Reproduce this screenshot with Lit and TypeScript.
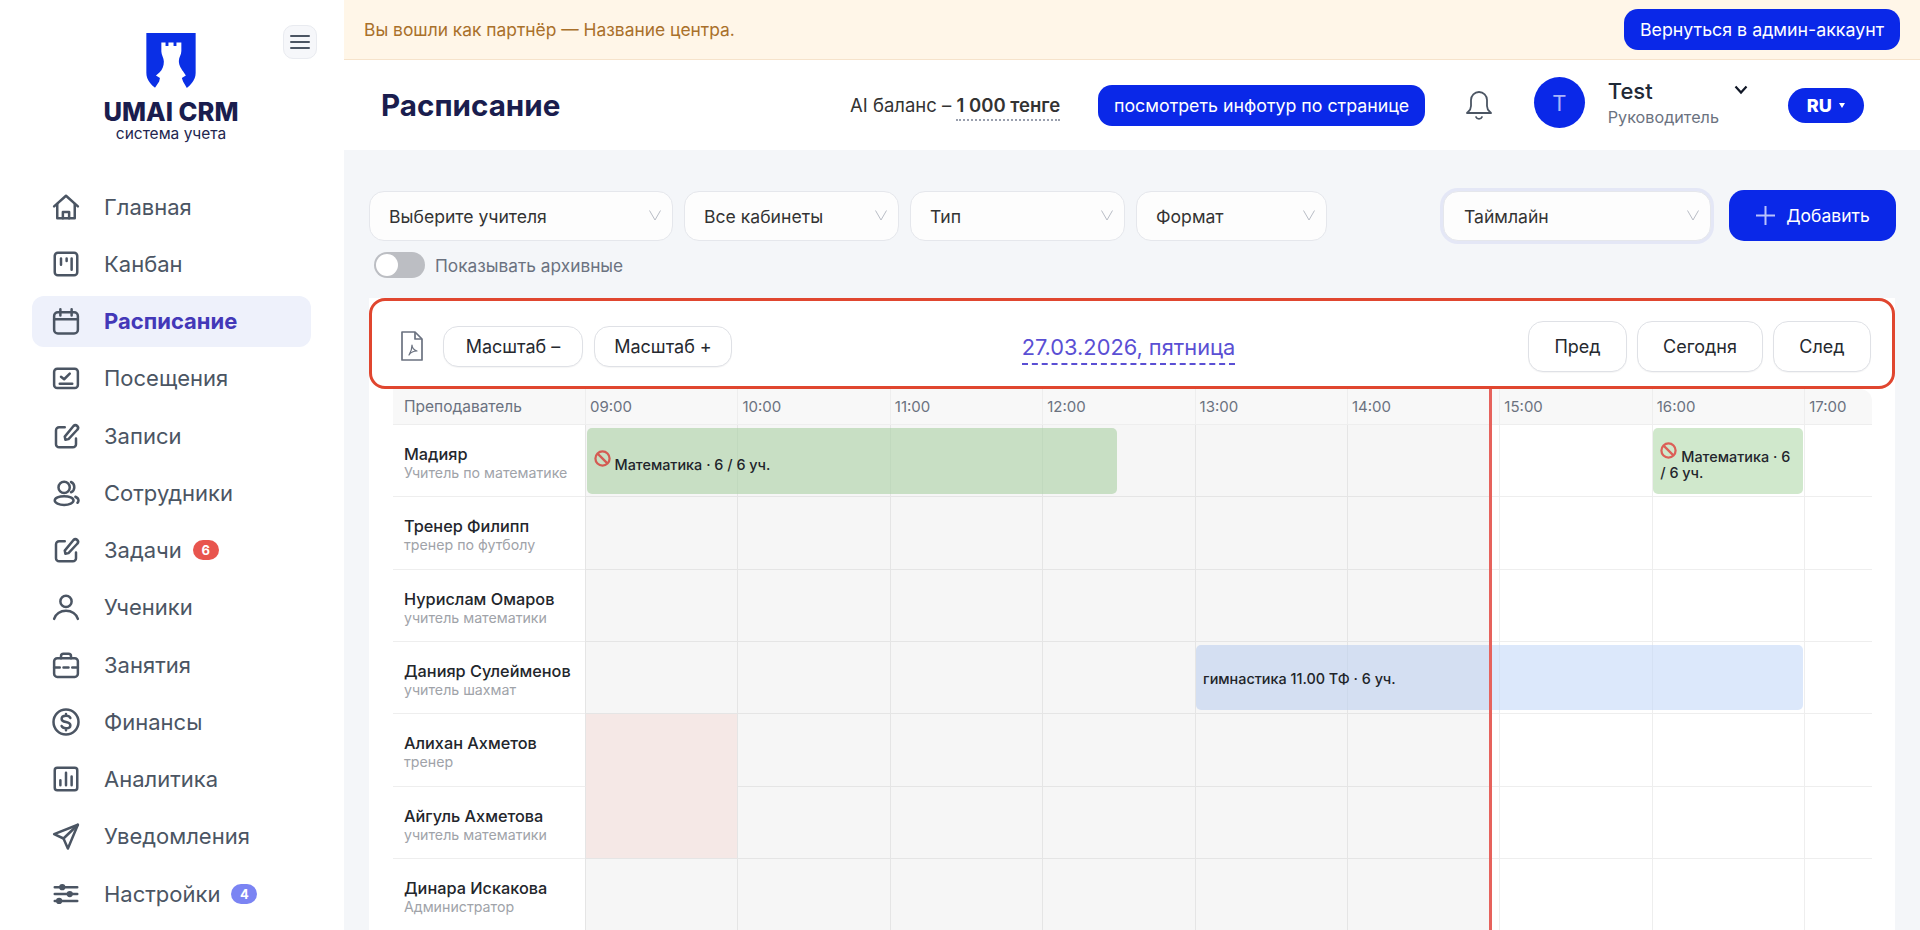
import { LitElement, html, css, svg } from 'lit';
import { customElement } from 'lit/decorators.js';

const icons: Record<string, unknown> = {
  home: svg`<path d="M2.5 11.5 12 3l9.5 8.5"/><path d="M5 9.5V21h14V9.5"/><path d="M9.5 21v-5h5v5"/>`,
  kanban: svg`<rect x="3" y="3" width="18" height="18" rx="2.5"/><path d="M8 7.5v5M12.5 7.5v2M16.5 7.5v9"/>`,
  calendar: svg`<rect x="2.5" y="5" width="19" height="17" rx="3"/><path d="M2.5 10.5h19M7.5 2.5v5M16.5 2.5v5"/>`,
  attendance: svg`<rect x="2.5" y="4.5" width="19" height="15.5" rx="2.5"/><path d="m8 11 2.5 2 4.5-4.5M7 16.5h10"/>`,
  edit: svg`<path d="M11 5H6.5A2.5 2.5 0 0 0 4 7.5v11A2.5 2.5 0 0 0 6.5 21h11a2.5 2.5 0 0 0 2.5-2.5V14"/><path d="M11 12.5 11.5 15 14 14.5 21 7a2 2 0 0 0-3-3z"/>`,
  users: svg`<circle cx="10.5" cy="7.5" r="4.5"/><ellipse cx="10.5" cy="18" rx="7.5" ry="3.5"/><path d="M16 3.2a4.5 4.5 0 0 1 0 8.2M19.5 15c1.5.7 2.5 1.8 2.5 3 0 .7-.3 1.3-.8 1.8"/>`,
  person: svg`<circle cx="12" cy="7.5" r="4.5"/><path d="M2.5 21.5c1-4 5-6.500 9.500-6.500s8.500 2.500 9.500 6.500"/>`,
  case: svg`<rect x="2.5" y="6.5" width="19" height="15" rx="2.5"/><path d="M8 6.5V5a2 2 0 0 1 2-2h4a2 2 0 0 1 2 2v1.500M2.500 14H7M10 14h4M17 14h4.500"/>`,
  money: svg`<circle cx="12" cy="12" r="10"/><path d="M15.500 8.800C15 7.600 13.700 7 12 7c-2 0-3.500 1-3.500 2.500 0 3.500 7 1.500 7 5 0 1.500-1.500 2.500-3.500 2.500-1.700 0-3-.600-3.500-1.800M12 5.500V7M12 17v1.500"/>`,
  chart: svg`<rect x="3" y="3" width="18" height="18" rx="2"/><path d="M7.500 17v-4M12 17V7M16.500 17v-7"/>`,
  send: svg`<path d="M21.500 3 2.500 10.500l7.500 3.500 3.500 8z"/><path d="M21.500 3 10 14"/>`,
  sliders: svg`<path d="M3 6.500h18M3 12h18M3 17.500h18"/><circle cx="9" cy="6.500" r="1.500" fill="currentColor"/><circle cx="15" cy="12" r="1.500" fill="currentColor"/><circle cx="6.500" cy="17.500" r="1.500" fill="currentColor"/>`,
};

const nav = [
  { icon: 'home', label: 'Главная' },
  { icon: 'kanban', label: 'Канбан' },
  { icon: 'calendar', label: 'Расписание', active: true },
  { icon: 'attendance', label: 'Посещения' },
  { icon: 'edit', label: 'Записи' },
  { icon: 'users', label: 'Сотрудники' },
  { icon: 'edit', label: 'Задачи', badge: '6', badgeClass: 'red' },
  { icon: 'person', label: 'Ученики' },
  { icon: 'case', label: 'Занятия' },
  { icon: 'money', label: 'Финансы' },
  { icon: 'chart', label: 'Аналитика' },
  { icon: 'send', label: 'Уведомления' },
  { icon: 'sliders', label: 'Настройки', badge: '4', badgeClass: 'violet' },
];

const hours = ['09:00', '10:00', '11:00', '12:00', '13:00', '14:00', '15:00', '16:00', '17:00'];
const HOUR_WIDTH = 152.4;
const NAME_WIDTH = 192;

const teachers = [
  {
    name: 'Мадияр',
    role: 'Учитель по математике',
    events: [
      { from: 9.01, to: 12.49, text: 'Математика · 6 / 6 уч.', kind: 'green', ban: true },
      { from: 16.01, to: 16.99, text: 'Математика · 6 / 6 уч.', kind: 'green', ban: true },
    ],
  },
  { name: 'Тренер Филипп', role: 'тренер по футболу', events: [] },
  { name: 'Нурислам Омаров', role: 'учитель математики', events: [] },
  {
    name: 'Данияр Сулейменов',
    role: 'учитель шахмат',
    events: [{ from: 13.01, to: 16.99, text: 'гимнастика 11.00 ТФ · 6 уч.', kind: 'blue', ban: false }],
  },
  { name: 'Алихан Ахметов', role: 'тренер', blocked: true, events: [] },
  { name: 'Айгуль Ахметова', role: 'учитель математики', blocked: true, events: [] },
  { name: 'Динара Искакова', role: 'Администратор', events: [] },
];

const chevron = html`<svg class="chev" viewBox="0 0 14 14"><path d="M1.5 2.5 7 12l5.5-9.5" /></svg>`;

@customElement('app-root')
export class AppRoot extends LitElement {
  static styles = css`
    :host {
      display: flex;
      width: 1920px;
      height: 930px;
      overflow: hidden;
      background: #f4f6f9;
      font-family: Inter, 'Noto Sans', sans-serif;
      color: #1f2937;
    }

    .sidebar {
      flex: 0 0 344px;
      background: #fff;
      position: relative;
    }
    .burger {
      position: absolute;
      left: 283px;
      top: 25px;
      width: 34px;
      height: 34px;
      box-sizing: border-box;
      border: 1px solid #e9ebf0;
      border-radius: 10px;
      background: #f6f7fa;
      display: flex;
      flex-direction: column;
      justify-content: center;
      align-items: center;
      gap: 4px;
    }
    .burger i {
      display: block;
      width: 20px;
      height: 2px;
      border-radius: 1px;
      background: #4b5563;
    }
    .logo {
      padding-top: 33px;
      display: flex;
      flex-direction: column;
      align-items: center;
      width: 342px;
    }
    .logo svg {
      width: 50px;
      height: 55px;
    }
    .logo b {
      margin-top: 9px;
      font-size: 25.5px;
      line-height: 30px;
      font-weight: 800;
      color: #1a1d4e;
    }
    .logo span {
      margin-top: -3px;
      font-size: 15.5px;
      line-height: 19px;
      color: #23264f;
    }
    .nav {
      margin-top: 38px;
      padding: 0 33px 0 32px;
      display: flex;
      flex-direction: column;
      gap: 6.25px;
    }
    .nav-item {
      height: 51px;
      border-radius: 12px;
      display: flex;
      align-items: center;
      padding-left: 19px;
      font-size: 22px;
      color: #4b5563;
    }
    .nav-item svg {
      width: 30px;
      height: 30px;
      margin-right: 23px;
      flex: none;
      fill: none;
      stroke: #4b5563;
      stroke-width: 2;
      stroke-linecap: round;
      stroke-linejoin: round;
    }
    .nav-item.active {
      background: #eef1fb;
      color: #4338b8;
      font-weight: 700;
    }
    .badge {
      margin-left: 11px;
      width: 26px;
      height: 20px;
      border-radius: 10px;
      color: #fff;
      font-size: 13px;
      font-weight: 700;
      display: flex;
      align-items: center;
      justify-content: center;
    }
    .badge.red {
      background: #e8554e;
    }
    .badge.violet {
      background: #7b84f3;
    }

    .main {
      flex: 1;
      min-width: 0;
      display: flex;
      flex-direction: column;
    }
    .banner {
      height: 60px;
      box-sizing: border-box;
      background: #fff6e8;
      border-bottom: 1px solid #f6e3cb;
      display: flex;
      align-items: center;
      justify-content: space-between;
      padding: 0 20px;
      font-size: 17.4px;
      color: #a9702a;
    }
    .primary {
      background: #0a28e8;
      color: #fff;
      font-size: 17.8px;
      display: flex;
      align-items: center;
      border-radius: 14px;
      padding: 0 16px;
      height: 41px;
      white-space: nowrap;
    }
    .topbar {
      height: 90px;
      background: #fff;
      display: flex;
      align-items: center;
      padding-left: 37px;
    }
    .topbar h1 {
      margin: 0;
      font-size: 29.6px;
      font-weight: 700;
      color: #1a1d4e;
      width: 469px;
    }
    .balance {
      width: 248px;
      font-size: 18.5px;
      color: #333;
      white-space: nowrap;
    }
    .balance b {
      font-weight: 600;
      border-bottom: 2px dotted #9aa0ae;
      padding-bottom: 3px;
    }
    .bell {
      width: 30px;
      height: 34px;
      margin: -2px 0 0 39px;
      fill: none;
      stroke: #4b5563;
      stroke-width: 1.8;
      stroke-linecap: round;
      stroke-linejoin: round;
    }
    .avatar {
      width: 51px;
      height: 51px;
      border-radius: 50%;
      background: #0a28e8;
      color: #a9b4fa;
      font-size: 22px;
      display: flex;
      align-items: center;
      justify-content: center;
      margin: -5px 23px 0 39.5px;
    }
    .user {
      width: 180px;
      position: relative;
      margin-top: -5px;
    }
    .user b {
      display: block;
      font-weight: 500;
      font-size: 22px;
      line-height: 28px;
      color: #1f2937;
    }
    .user span {
      font-size: 16.2px;
      line-height: 24px;
      color: #6b7280;
    }
    .user svg {
      position: absolute;
      left: 126px;
      top: 8px;
      width: 14px;
      height: 10px;
      fill: none;
      stroke: #111827;
      stroke-width: 2.2;
    }
    .lang {
      width: 76px;
      height: 35px;
      border-radius: 18px;
      background: #0a28e8;
      color: #fff;
      font-weight: 800;
      font-size: 18px;
      display: flex;
      align-items: center;
      justify-content: center;
      gap: 7px;
    }
    .lang i {
      width: 0;
      height: 0;
      border: 3px solid transparent;
      border-top: 5px solid #fff;
      border-bottom: 0;
    }

    .content {
      flex: 1;
      min-height: 0;
      padding: 41px 25px 0;
      display: flex;
      flex-direction: column;
    }
    .filters {
      display: flex;
      gap: 11px;
      align-items: flex-start;
    }
    .select {
      flex: none;
      height: 50px;
      box-sizing: border-box;
      border: 1px solid #e5e7ec;
      border-radius: 15px;
      background: #fdfdfd;
      display: flex;
      align-items: center;
      justify-content: space-between;
      padding: 0 10px 0 19px;
      font-size: 17.6px;
      color: #333;
    }
    .select.view {
      margin-left: 105px;
      box-shadow: 0 0 0 3px #e4e7f6;
      margin-right: 7px;
      padding-left: 20px;
    }
    .chev {
      width: 14px;
      height: 14px;
      margin-top: -3px;
      fill: none;
      stroke: #b9bdc6;
      stroke-width: 1;
    }
    .add {
      flex: none;
      height: 51px;
      width: 167px;
      margin-top: -1px;
      border-radius: 15px;
      background: #0a28e8;
      color: #fff;
      font-size: 17.5px;
      display: flex;
      align-items: center;
      justify-content: center;
      gap: 10px;
    }
    .add svg {
      width: 21px;
      height: 21px;
      stroke: #b9c2fb;
      stroke-width: 2;
    }
    .archive {
      margin-top: 11px;
      display: flex;
      align-items: center;
      gap: 10px;
      padding-left: 5px;
      height: 26px;
      font-size: 17.3px;
      color: #6b7280;
    }
    .toggle {
      width: 51px;
      height: 26px;
      border-radius: 13px;
      background: #bcbec3;
      display: flex;
      align-items: center;
      padding-left: 2px;
      box-sizing: border-box;
    }
    .toggle i {
      width: 22px;
      height: 22px;
      border-radius: 50%;
      background: #fff;
    }

    .panel {
      margin-top: 20px;
      flex: 1;
      min-height: 0;
      background: #fff;
      display: flex;
      flex-direction: column;
    }
    .toolbar {
      height: 91px;
      box-sizing: border-box;
      border: 3px solid #e0462f;
      border-radius: 16px;
      background: #fff;
      display: grid;
      grid-template-columns: 1fr auto 1fr;
      align-items: center;
      padding: 5px 21px 0 28px;
      position: relative;
      z-index: 2;
    }
    .tools {
      display: flex;
      align-items: center;
      gap: 11px;
    }
    .tools.right {
      justify-content: flex-end;
      gap: 10px;
    }
    .pdf {
      width: 24px;
      height: 32px;
      margin-right: 8px;
      fill: none;
      stroke: #6b7280;
      stroke-width: 1.7;
      stroke-linejoin: round;
    }
    .btn {
      box-sizing: border-box;
      height: 41px;
      border: 1px solid #dfe1e6;
      border-radius: 15px;
      background: #fff;
      display: flex;
      align-items: center;
      justify-content: center;
      font-size: 18px;
      color: #26292f;
      box-shadow: 0 1px 1px rgba(0, 0, 0, 0.04);
    }
    .tools.right .btn {
      height: 51px;
    }
    .date {
      margin: 6px 14px 0 0;
      font-size: 21.8px;
      color: #5a4fd4;
      padding-bottom: 3px;
      border-bottom: 2px dashed #5a4fd4;
      white-space: nowrap;
    }

    .timeline {
      margin: 0 23px 0 24px;
      position: relative;
      flex: 1;
      min-height: 0;
    }
    .row {
      display: grid;
      grid-template-columns: ${NAME_WIDTH}px repeat(8, ${HOUR_WIDTH}px) 1fr;
      height: 72.33px;
      position: relative;
      box-sizing: border-box;
    }
    .row.head {
      height: 36px;
      background: #f8f8f8;
      color: #6b7280;
      border-radius: 0 12px 0 0;
    }
    .cell {
      border-left: 1px solid #eeeeee;
      border-bottom: 1px solid #eeeeee;
      box-sizing: border-box;
    }
    .row.head .cell {
      display: flex;
      align-items: center;
      padding-left: 4px;
      font-size: 15px;
    }
    .who {
      border-left: 0;
      padding: 4px 0 0 11px;
      display: flex;
      flex-direction: column;
      justify-content: center;
      background: #fff;
      white-space: nowrap;
    }
    .row.head .who {
      padding: 0 0 0 11px;
      font-size: 15.5px;
      border-left: 0;
      flex-direction: row;
      justify-content: flex-start;
      background: transparent;
    }
    .who b {
      font-weight: 500;
      font-size: 16.3px;
      line-height: 22px;
      color: #23262c;
    }
    .who span {
      margin-top: -1px;
      font-size: 14.2px;
      line-height: 18px;
      color: #a0a3a9;
    }
    .blocked {
      background: #fef1ef;
    }
    .row.first-blocked .blocked {
      border-bottom-color: #fef1ef;
    }
    .event {
      position: absolute;
      top: 3px;
      height: 65.5px;
      border-radius: 5px;
      box-sizing: border-box;
      padding: 2px 7px 0;
      display: flex;
      align-items: center;
      font-weight: 500;
      font-size: 14.4px;
      line-height: 16px;
      color: #23262c;
    }
    .event.green {
      background: rgba(177, 217, 170, 0.6);
    }
    .event.blue {
      background: rgba(197, 217, 248, 0.6);
    }
    .ban {
      width: 17px;
      height: 17px;
      vertical-align: 3px;
      margin-right: 4px;
      fill: none;
      stroke: #dc5f57;
      stroke-width: 2.4;
    }
    .past {
      position: absolute;
      left: ${NAME_WIDTH}px;
      top: 36px;
      bottom: 0;
      width: 905px;
      background: rgba(0, 0, 0, 0.035);
      pointer-events: none;
    }
    .now {
      position: absolute;
      left: 1096px;
      top: 0;
      bottom: 0;
      width: 3px;
      background: #e6625c;
    }
  `;

  renderRow(t: (typeof teachers)[number], i: number) {
    const firstBlocked = t.blocked && teachers[i + 1]?.blocked;
    return html`
      <div class="row ${firstBlocked ? 'first-blocked' : ''}">
        <div class="cell who"><b>${t.name}</b><span>${t.role}</span></div>
        ${hours.map((_, h) => html`<div class="cell ${t.blocked && h === 0 ? 'blocked' : ''}"></div>`)}
        ${t.events.map(
          (e) => html`
            <div
              class="event ${e.kind}"
              style="left:${NAME_WIDTH + (e.from - 9) * HOUR_WIDTH}px;width:${(e.to - e.from) * HOUR_WIDTH}px"
            >
              <div>
                ${e.ban
                  ? html`<svg class="ban" viewBox="0 0 18 18"><circle cx="9" cy="9" r="7.5" /><path d="M3.8 3.8l10.4 10.4" /></svg>`
                  : ''}${e.text}
              </div>
            </div>
          `,
        )}
      </div>
    `;
  }

  render() {
    return html`
      <aside class="sidebar">
        <div class="burger"><i></i><i></i><i></i></div>
        <div class="logo">
          <svg viewBox="0 0 49.3 55">
            <path d="M0 0H49.3V40C49.3 47 44 52 40.5 55H9C5 52 0 47 0 40Z" fill="#0a2fe6" />
            <path
              d="M15 9.5h4.2v3.5h2.9V9.5h5.1v3.5h2.9V9.5H35V18c0 4-2.5 6-2.5 10 0 5 3 8.5 5 11.5l2 3-4 2.5 1.2 3.5 3.8 6.5-1 .6H9.3l-.8-.6 4.3-6.5.8-3.5-4-2.5 3.5-3c3-3 4.4-6.5 4.4-11 0-3.500-2.500-6.500-2.500-10z"
              fill="#fff"
            />
          </svg>
          <b>UMAI CRM</b>
          <span>система учета</span>
        </div>
        <nav class="nav">
          ${nav.map(
            (n) => html`
              <div class="nav-item ${n.active ? 'active' : ''}">
                <svg viewBox="0 0 24 24">${icons[n.icon]}</svg>
                ${n.label}
                ${n.badge ? html`<span class="badge ${n.badgeClass}">${n.badge}</span>` : ''}
              </div>
            `,
          )}
        </nav>
      </aside>
      <div class="main">
        <div class="banner">
          <span>Вы вошли как партнёр — Название центра.</span>
          <div class="primary">Вернуться в админ-аккаунт</div>
        </div>
        <header class="topbar">
          <h1>Расписание</h1>
          <div class="balance">AI баланс – <b>1 000 тенге</b></div>
          <div class="primary">посмотреть инфотур по странице</div>
          <svg class="bell" viewBox="0 0 30 34">
            <path d="M3 26c2-2 4-3 4-7v-6a8 8 0 0 1 16 0v6c0 4 2 5 4 7z" />
            <path d="M12 30c1 2.5 5 2.5 6 0" />
          </svg>
          <div class="avatar">T</div>
          <div class="user">
            <b>Test</b>
            <span>Руководитель</span>
            <svg viewBox="0 0 14 10"><path d="M1.5 1.5 7 7.5l5.5-6" /></svg>
          </div>
          <div class="lang">RU<i></i></div>
        </header>
        <section class="content">
          <div class="filters">
            <div class="select" style="width:304px">Выберите учителя ${chevron}</div>
            <div class="select" style="width:215px">Все кабинеты ${chevron}</div>
            <div class="select" style="width:215px">Тип ${chevron}</div>
            <div class="select" style="width:191px">Формат ${chevron}</div>
            <div class="select view" style="width:268px">Таймлайн ${chevron}</div>
            <div class="add">
              <svg viewBox="0 0 21 21"><path d="M10.5 1v19M1 10.5h19" /></svg>
              Добавить
            </div>
          </div>
          <div class="archive"><div class="toggle"><i></i></div>Показывать архивные</div>
          <div class="panel">
            <div class="toolbar">
              <div class="tools">
                <svg class="pdf" viewBox="0 0 24 32">
                  <path d="M2 2h13l7 7v21H2z" />
                  <path d="M15 2v7h7" />
                  <path d="M9 25c2-3 3-6 3-10 0 3 2 5 5 6-3 0-6 1-8 4z" stroke-width="1.2" />
                </svg>
                <div class="btn" style="width:140px">Масштаб –</div>
                <div class="btn" style="width:138px">Масштаб +</div>
              </div>
              <div class="date">27.03.2026, пятница</div>
              <div class="tools right">
                <div class="btn" style="width:99px">Пред</div>
                <div class="btn" style="width:126px">Сегодня</div>
                <div class="btn" style="width:98px">След</div>
              </div>
            </div>
            <div class="timeline">
              <div class="row head">
                <div class="cell who">Преподаватель</div>
                ${hours.map((h) => html`<div class="cell">${h}</div>`)}
              </div>
              ${teachers.map((t, i) => this.renderRow(t, i))}
              <div class="past"></div>
              <div class="now"></div>
            </div>
          </div>
        </section>
      </div>
    `;
  }
}
